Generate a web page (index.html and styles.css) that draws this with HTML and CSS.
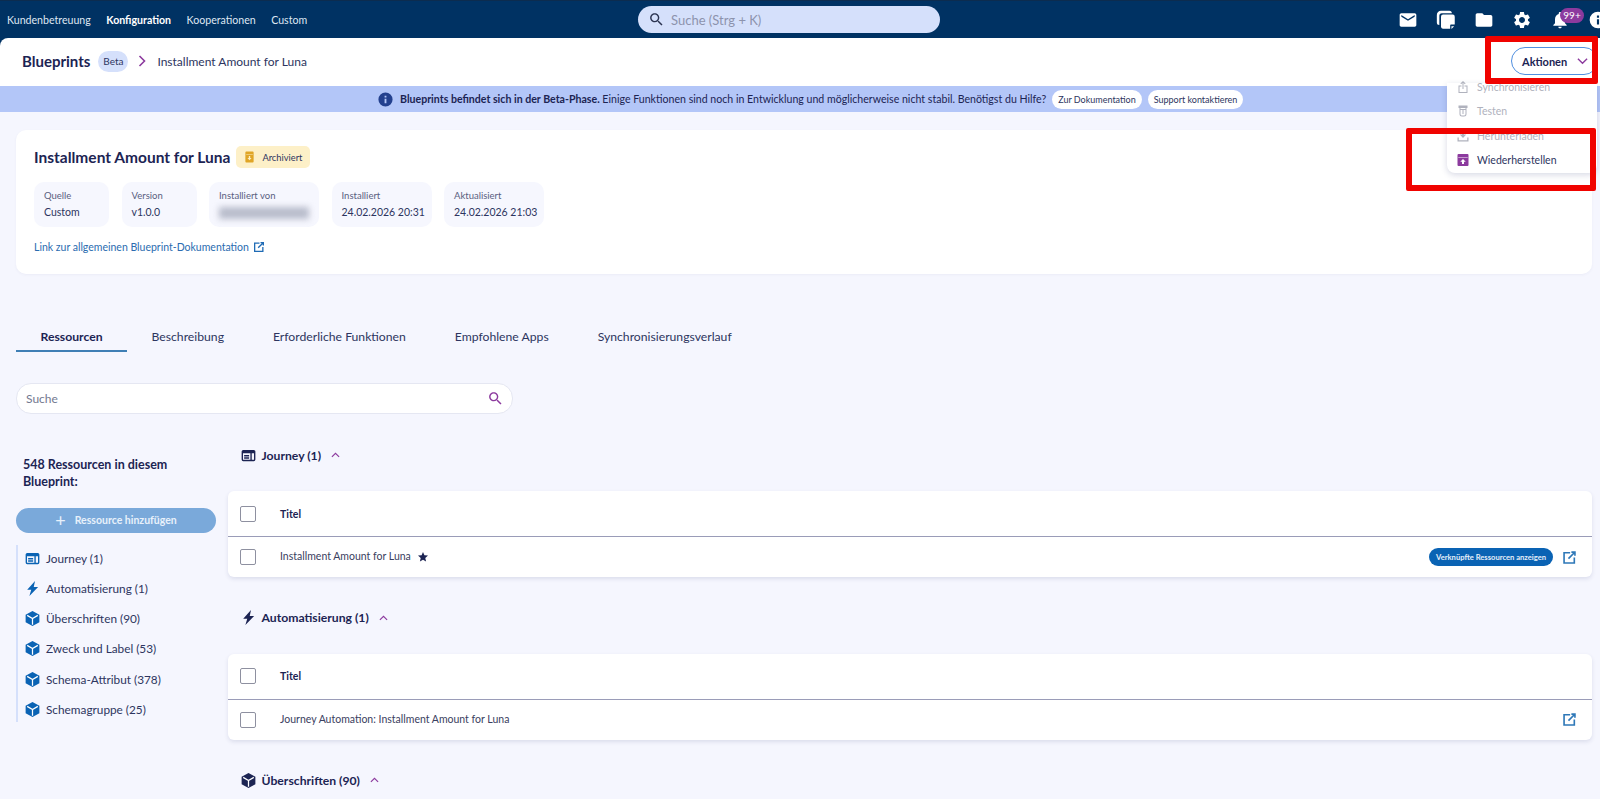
FILE: index.html
```html
<!DOCTYPE html>
<html lang="de">
<head>
<meta charset="utf-8">
<title>Blueprints</title>
<link rel="stylesheet" href="styles.css">
</head>
<body>
<svg class="defs" width="0" height="0" aria-hidden="true">
  <symbol id="i-search" viewBox="0 0 24 24"><path d="M15.5 14h-.79l-.28-.27C15.41 12.59 16 11.11 16 9.5 16 5.91 13.09 3 9.5 3S3 5.91 3 9.5 5.91 16 9.5 16c1.61 0 3.09-.59 4.23-1.57l.27.28v.79l5 4.99L20.49 19l-4.99-5zm-6 0C7.01 14 5 11.99 5 9.5S7.01 5 9.5 5 14 7.01 14 9.5 11.99 14 9.5 14z"/></symbol>
  <symbol id="i-mail" viewBox="0 0 24 24"><path d="M20 4H4c-1.1 0-2 .9-2 2v12c0 1.1.9 2 2 2h16c1.1 0 2-.9 2-2V6c0-1.1-.9-2-2-2zm0 4l-8 5-8-5V6l8 5 8-5v2z"/></symbol>
  <symbol id="i-copies" viewBox="0 0 24 24"><path d="M6 1h10a3 3 0 0 1 3 3H7a3 3 0 0 0-3 3v11a3 3 0 0 1-3-3V6a5 5 0 0 1 5-5z"/><path d="M8.500 5.500H20a2.500 2.500 0 0 1 2.500 2.500v9l-.2.5H18a1 1 0 0 0-1 1v4H8.500A2.500 2.500 0 0 1 6 20.500V8a2.500 2.500 0 0 1 2.500-2.500z"/><path d="M18.500 19.500h3.300l-3.300 3.300z"/></symbol>
  <symbol id="i-folder" viewBox="0 0 24 24"><path d="M10 4H4c-1.1 0-1.99.9-1.99 2L2 18c0 1.1.9 2 2 2h16c1.1 0 2-.9 2-2V8c0-1.1-.9-2-2-2h-8l-2-2z"/></symbol>
  <symbol id="i-gear" viewBox="0 0 24 24"><path d="M19.14 12.94c.04-.3.06-.61.06-.94 0-.32-.02-.64-.07-.94l2.03-1.58c.18-.14.23-.41.12-.61l-1.92-3.32c-.12-.22-.37-.29-.59-.22l-2.39.96c-.5-.38-1.03-.7-1.62-.94l-.36-2.54c-.04-.24-.24-.41-.48-.41h-3.84c-.24 0-.43.17-.47.41l-.36 2.54c-.59.24-1.13.57-1.62.94l-2.39-.96c-.22-.08-.47 0-.59.22L2.74 8.87c-.12.21-.08.47.12.61l2.03 1.58c-.05.3-.09.63-.09.94s.02.64.07.94l-2.03 1.58c-.18.14-.23.41-.12.61l1.92 3.32c.12.22.37.29.59.22l2.39-.96c.5.38 1.03.7 1.62.94l.36 2.54c.05.24.24.41.48.41h3.84c.24 0 .44-.17.47-.41l.36-2.54c.59-.24 1.13-.56 1.62-.94l2.39.96c.22.08.47 0 .59-.22l1.92-3.32c.12-.22.07-.47-.12-.61l-2.01-1.58zM12 15.6c-1.98 0-3.6-1.62-3.6-3.6s1.62-3.6 3.6-3.6 3.6 1.62 3.6 3.6-1.62 3.6-3.6 3.6z"/></symbol>
  <symbol id="i-bell" viewBox="0 0 24 24"><path d="M12 22c1.1 0 2-.9 2-2h-4c0 1.1.9 2 2 2zm6-6v-5c0-3.07-1.63-5.64-4.5-6.32V4c0-.83-.67-1.5-1.5-1.5s-1.5.67-1.5 1.5v.68C7.64 5.36 6 7.92 6 11v5l-2 2v1h16v-1l-2-2z"/></symbol>
  <symbol id="i-info" viewBox="0 0 24 24"><path fill-rule="evenodd" d="M12 2a10 10 0 1 0 0 20 10 10 0 0 0 0-20zm-1.3 4.6h2.6v2.6h-2.6zm0 4.4h2.6v6.4h-2.6z"/></symbol>
  <symbol id="i-journey" viewBox="0 0 24 24"><path fill-rule="evenodd" d="M3.500 3h17A2.500 2.500 0 0 1 23 5.500v13a2.500 2.500 0 0 1-2.500 2.500h-17A2.500 2.500 0 0 1 1 18.500v-13A2.500 2.500 0 0 1 3.500 3zM3.200 8.500v10.300H15V8.500zm14 0v10.300h3.600V8.500zM5 11h8v2.400H5zm0 3.800h8v2.400H5z"/></symbol>
  <symbol id="i-bolt" viewBox="0 0 24 24"><path d="M16 0 3.500 14H10L7 24 21 9.500h-7z"/></symbol>
  <symbol id="i-cube" viewBox="0 0 24 24"><path d="M12 0 23 6v12L12 24 1 18V6z"/><path d="M3.500 7 12 12l8.500-5M12 12v10" fill="none" stroke="#fff" stroke-width="2"/></symbol>
  <symbol id="i-star" viewBox="0 0 24 24"><path d="M12 17.270 18.180 21l-1.640-7.030L22 9.240l-7.190-.61L12 2 9.190 8.630 2 9.240l5.460 4.730L5.820 21z"/></symbol>
  <symbol id="i-open" viewBox="0 0 24 24"><path d="M2 3h11v2.600H4.600v13.800h13.800V12H21v10H2z"/><path d="M15 2h7v7h-2.600V6.500l-8.100 8.100-1.900-1.900 8.100-8.100H15z"/></symbol>
  <symbol id="i-share" viewBox="0 0 24 24"><path d="M12 0 6.800 5.200l1.400 1.400 2.800-2.800V16h2V3.800l2.800 2.800 1.400-1.400z"/><path d="M9 9H3v15h18V9h-6v2h4v11H5V11h4z"/></symbol>
  <symbol id="i-tube" viewBox="0 0 24 24"><path fill-rule="evenodd" d="M3 1h18v5h-2v12a5 5 0 0 1-5 5h-4a5 5 0 0 1-5-5V6H3zm4 5v2h10V6zm0 4v8a3 3 0 0 0 3 3h4a3 3 0 0 0 3-3v-8zm3 1h4v2h-4zm0 4h4v2h-4z"/></symbol>
  <symbol id="i-download" viewBox="0 0 24 24"><path d="M10 1h4v8h4.500L12 16 5.500 9H10z"/><path d="M1 15h2.500v5.500h17V15H23v8H1z"/></symbol>
  <symbol id="i-restore" viewBox="0 0 24 24"><path fill-rule="evenodd" d="M3 0h18a2 2 0 0 1 2 2v20a2 2 0 0 1-2 2H3a2 2 0 0 1-2-2V2a2 2 0 0 1 2-2zm-.5 6.500v1h19v-1zM12 10l-5.500 5.500H10V20h4v-4.500h3.500z"/></symbol>
  <symbol id="i-archive" viewBox="0 0 24 24"><path fill-rule="evenodd" d="M5 0h14a2 2 0 0 1 2 2v20a2 2 0 0 1-2 2H5a2 2 0 0 1-2-2V2a2 2 0 0 1 2-2zm-.2 6.500v1h14.400v-1zM10.500 10v4H7.500l4.500 5 4.500-5h-3v-4z"/></symbol>
</svg>

<div class="chrome">
  <header class="topbar">
    <nav class="mainnav">
      <a class="navlink">Kundenbetreuung</a>
      <a class="navlink navlink-active">Konfiguration</a>
      <a class="navlink">Kooperationen</a>
      <a class="navlink">Custom</a>
    </nav>
    <div class="globalsearch">
      <svg class="gs-icon"><use href="#i-search"/></svg>
      <span>Suche (Strg + K)</span>
    </div>
    <div class="topicons">
      <svg class="ti"><use href="#i-mail"/></svg>
      <svg class="ti"><use href="#i-copies"/></svg>
      <svg class="ti"><use href="#i-folder"/></svg>
      <svg class="ti"><use href="#i-gear"/></svg>
      <span class="bellwrap"><svg class="ti"><use href="#i-bell"/></svg><span class="badge">99+</span></span>
      <svg class="ti"><use href="#i-info"/></svg>
    </div>
  </header>
  <div class="subheader">
    <span class="crumb-root">Blueprints</span>
    <span class="beta">Beta</span>
    <svg class="crumb-sep" viewBox="0 0 10 14"><path d="M2.500 2 7.500 7l-5 5" fill="none" stroke="#8c3a9e" stroke-width="1.600"/></svg>
    <span class="crumb-leaf">Installment Amount for Luna</span>
    <button class="actions">Aktionen<svg class="actions-chev" viewBox="0 0 12 8"><path d="M1 1.500 6 6.500l5-5" fill="none" stroke="#8c3a9e" stroke-width="1.500"/></svg></button>
  </div>
</div>

<div class="banner">
  <svg class="banner-icon"><use href="#i-info"/></svg>
  <p class="banner-text"><b>Blueprints befindet sich in der Beta-Phase.</b> Einige Funktionen sind noch in Entwicklung und möglicherweise nicht stabil. Benötigst du Hilfe?</p>
  <a class="banner-btn">Zur Dokumentation</a>
  <a class="banner-btn">Support kontaktieren</a>
</div>

<main class="content">
  <section class="card">
    <div class="card-head">
      <h1 class="card-title">Installment Amount for Luna</h1>
      <span class="archived"><svg class="archived-icon"><use href="#i-archive"/></svg>Archiviert</span>
    </div>
    <div class="tiles">
      <div class="tile tile-source"><span class="tile-label">Quelle</span><span class="tile-value">Custom</span></div>
      <div class="tile tile-version"><span class="tile-label">Version</span><span class="tile-value">v1.0.0</span></div>
      <div class="tile tile-user"><span class="tile-label">Installiert von</span><span class="tile-blur"></span></div>
      <div class="tile tile-date"><span class="tile-label">Installiert</span><span class="tile-value">24.02.2026 20:31</span></div>
      <div class="tile tile-date"><span class="tile-label">Aktualisiert</span><span class="tile-value">24.02.2026 21:03</span></div>
    </div>
    <a class="doclink">Link zur allgemeinen Blueprint-Dokumentation<svg class="doclink-icon"><use href="#i-open"/></svg></a>
  </section>

  <div class="tabs">
    <a class="tab tab-active">Ressourcen</a>
    <a class="tab">Beschreibung</a>
    <a class="tab">Erforderliche Funktionen</a>
    <a class="tab">Empfohlene Apps</a>
    <a class="tab">Synchronisierungsverlauf</a>
  </div>

  <div class="searchbox">
    <span>Suche</span>
    <svg class="searchbox-icon"><use href="#i-search"/></svg>
  </div>

  <div class="columns">
    <aside class="side">
      <h2 class="side-title">548 Ressourcen in diesem Blueprint:</h2>
      <button class="addbtn"><span class="addbtn-plus">+</span>Ressource hinzufügen</button>
      <ul class="side-list">
        <li class="side-item"><svg class="side-icon"><use href="#i-journey"/></svg>Journey (1)</li>
        <li class="side-item"><svg class="side-icon"><use href="#i-bolt"/></svg>Automatisierung (1)</li>
        <li class="side-item"><svg class="side-icon"><use href="#i-cube"/></svg>Überschriften (90)</li>
        <li class="side-item"><svg class="side-icon"><use href="#i-cube"/></svg>Zweck und Label (53)</li>
        <li class="side-item"><svg class="side-icon"><use href="#i-cube"/></svg>Schema-Attribut (378)</li>
        <li class="side-item"><svg class="side-icon"><use href="#i-cube"/></svg>Schemagruppe (25)</li>
      </ul>
    </aside>

    <div class="sections">
      <section class="group">
        <h3 class="group-head"><svg class="group-icon"><use href="#i-journey"/></svg>Journey (1)<svg class="group-chev" viewBox="0 0 10 6"><path d="M1 5 5 1.200 9 5" fill="none" stroke="#8c3a9e" stroke-width="1.300"/></svg></h3>
        <div class="table">
          <div class="tr th"><span class="cb"></span><span class="th-label">Titel</span></div>
          <div class="tr">
            <span class="cb"></span><span class="td-label">Installment Amount for Luna</span>
            <svg class="star"><use href="#i-star"/></svg>
            <a class="linkpill">Verknüpfte Ressourcen anzeigen</a>
            <svg class="openicon"><use href="#i-open"/></svg>
          </div>
        </div>
      </section>
      <section class="group">
        <h3 class="group-head"><svg class="group-icon"><use href="#i-bolt"/></svg>Automatisierung (1)<svg class="group-chev" viewBox="0 0 10 6"><path d="M1 5 5 1.200 9 5" fill="none" stroke="#8c3a9e" stroke-width="1.300"/></svg></h3>
        <div class="table">
          <div class="tr th"><span class="cb"></span><span class="th-label">Titel</span></div>
          <div class="tr">
            <span class="cb"></span><span class="td-label">Journey Automation: Installment Amount for Luna</span>
            <svg class="openicon openicon-solo"><use href="#i-open"/></svg>
          </div>
        </div>
      </section>
      <section class="group">
        <h3 class="group-head"><svg class="group-icon"><use href="#i-cube"/></svg>Überschriften (90)<svg class="group-chev" viewBox="0 0 10 6"><path d="M1 5 5 1.200 9 5" fill="none" stroke="#8c3a9e" stroke-width="1.300"/></svg></h3>
      </section>
    </div>
  </div>
</main>

<div class="menu">
  <div class="menu-item menu-off"><svg class="menu-icon"><use href="#i-share"/></svg>Synchronisieren</div>
  <div class="menu-item menu-off"><svg class="menu-icon"><use href="#i-tube"/></svg>Testen</div>
  <div class="menu-item menu-off"><svg class="menu-icon"><use href="#i-download"/></svg>Herunterladen</div>
  <div class="menu-item"><svg class="menu-icon menu-icon-on"><use href="#i-restore"/></svg>Wiederherstellen</div>
</div>
<div class="mark mark-actions"></div>
<div class="mark mark-restore"></div>
</body>
</html>
```

FILE: styles.css
```css
* { box-sizing: border-box; }
html, body { margin: 0; height: 799px; overflow: hidden; }
body {
  position: relative;
  background: #f5f6fe;
  font-family: "Lato", "Liberation Sans", sans-serif;
  color: #1c2453;
  font-size: 13px;
}
.defs { position: absolute; }
svg { display: block; flex: none; fill: currentColor; }
h1, h2, h3, p, ul { margin: 0; padding: 0; }
ul { list-style: none; }
button { font: inherit; }

.chrome { background: #003263; }
.topbar { height: 38px; display: flex; align-items: center; color: #fff; border-top: 1px solid #0c2c4f; }
.mainnav { flex: 0 0 638px; display: flex; gap: 15.500px; padding-left: 7px; font-size: 10.600px; color: #dfe6f2; }
.navlink-active { font-weight: 700; color: #fff; }
.globalsearch {
  width: 302px; height: 27px; border-radius: 14px; background: #d5e0fb;
  display: flex; align-items: center; gap: 6px; padding-left: 10px;
  color: #8d93ad; font-size: 13px;
}
.gs-icon { width: 17px; height: 17px; color: #2b3350; }
.topicons { margin-left: auto; margin-right: -8px; display: flex; align-items: center; gap: 18px; color: #fff; }
.ti { width: 20px; height: 20px; }
.bellwrap { position: relative; display: block; }
.badge {
  position: absolute; left: 10px; top: -2px; width: 24px; height: 15px; border-radius: 8px;
  background: #8c3a9e; color: #fff; font-size: 10px; line-height: 15px; text-align: center;
}

.subheader {
  height: 48px; background: #fff; border-radius: 8px 0 0 0;
  display: flex; align-items: center; padding: 0 0 2px 22px;
}
.crumb-root { font-size: 15px; font-weight: 700; color: #1c2453; }
.beta {
  margin-left: 8px; width: 30px; height: 21px; border-radius: 11px; background: #d5e0fb;
  font-size: 10px; line-height: 21px; text-align: center; color: #2d3560;
}
.crumb-sep { margin-left: 9px; width: 10px; height: 14px; }
.crumb-leaf { margin-left: 10px; font-size: 12px; color: #2d3560; }
.actions {
  margin-left: auto; margin-right: 2px; width: 87px; height: 28px; padding: 0 0 0 10px;
  display: flex; align-items: center; gap: 10px;
  background: #fff; border: 1.500px solid #4f8fe0; border-radius: 14px;
  font-weight: 700; font-size: 11px; color: #1c2453;
}
.actions-chev { width: 11px; height: 8px; }

.banner {
  height: 26px; background: #b3c6f8; display: flex; align-items: center; padding-left: 377px;
  font-size: 10.600px; color: #1c2453;
}
.banner-icon { width: 17px; height: 17px; color: #23408e; margin-right: 6px; }
.banner-text { white-space: nowrap; }
.banner-btn {
  margin-left: 6px; height: 19px; padding: 0 6px; border-radius: 10px; background: #fff;
  font-size: 9px; line-height: 19px; color: #2d3560;
}

.content { padding: 18px 8px 0 16px; }
.card { height: 144px; background: #fff; border-radius: 10px; padding: 16px 18px 0; box-shadow: 0 1px 3px rgba(50,60,120,.05); }
.card-head { display: flex; align-items: center; gap: 6px; }
.card-title { font-size: 15.500px; font-weight: 700; color: #1c2453; }
.archived {
  height: 22px; padding: 0 8px; border-radius: 5px; background: #fdf0c8;
  display: flex; align-items: center; gap: 7px; font-size: 9.300px; color: #2d3560;
}
.archived-icon { width: 11px; height: 12px; color: #e0a526; }
.tiles { display: flex; gap: 12.500px; margin-top: 14px; }
.tile {
  height: 45px; border-radius: 10px; background: #f6f7fe; padding: 8px 10px 0;
  display: flex; flex-direction: column; gap: 5px; white-space: nowrap;
}
.tile-source, .tile-version { width: 75px; }
.tile-user { width: 110px; }
.tile-date { width: 100px; }
.tile-label { font-size: 9.500px; color: #5a607f; }
.tile-value { font-size: 10.500px; color: #2d3560; }
.tile-blur { width: 90px; height: 12px; margin-top: 1px; background: #b8bccb; filter: blur(3px); }
.doclink { display: flex; align-items: center; gap: 4px; margin-top: 14px; font-size: 10.500px; color: #2b6cb0; }
.doclink-icon { width: 12px; height: 12px; color: #1f6bb5; }

.tabs { display: flex; margin-top: 48px; height: 30px; font-size: 12.200px; color: #2d3560; }
.tab { padding: 0 24.500px; line-height: 29px; height: 30px; }
.tab-active { font-weight: 700; color: #1c2453; border-bottom: 2px solid #3f7fb5; }

.searchbox {
  margin-top: 31px; width: 497px; height: 31px; background: #fff;
  border: 1px solid #e5e7f2; border-radius: 15px;
  display: flex; align-items: center; justify-content: space-between; padding: 0 8px 1px 9px;
  font-size: 12px; color: #73788f;
}
.searchbox-icon { width: 17px; height: 17px; color: #8c3a9e; }

.columns { display: flex; margin-top: 29px; }
.side { flex: 0 0 200px; padding-top: 13px; }
.side-title { padding-left: 7px; font-size: 12.500px; line-height: 17px; font-weight: 700; color: #1c2453; width: 170px; }
.addbtn {
  width: 200px; height: 25px; margin-top: 18px; padding: 0 0 2px; border: 0; border-radius: 13px;
  background: #7aa9da; color: #e8f1fb; font-size: 10.500px; font-weight: 700;
  display: flex; align-items: center; justify-content: center; gap: 9px;
}
.addbtn-plus { font-size: 18px; font-weight: 400; line-height: 1; }
.side-list { margin-top: 12px; border-left: 2px solid #d5e0fb; display: flex; flex-direction: column; gap: 4.300px; }
.side-item { height: 26px; display: flex; align-items: center; gap: 6px; padding-left: 7px; font-size: 11.800px; color: #2d3560; }
.side-icon { width: 15px; height: 15px; color: #0a63b4; }

.sections { flex: 1; margin-left: 12px; margin-right: 0; }
.group { margin-bottom: 28.500px; }
.group-head {
  height: 24px; display: flex; align-items: center; padding-left: 12.500px;
  font-size: 12.200px; font-weight: 700; color: #1c2453;
}
.group-icon { width: 15px; height: 15px; margin-right: 6px; color: #1c2453; }
.group-chev { width: 9px; height: 6px; margin-left: 10px; }
.table { margin-top: 24px; background: #fff; border-radius: 6px; box-shadow: 0 2px 4px rgba(40,50,110,.12); }
.tr { height: 40px; display: flex; align-items: center; padding-left: 12px; }
.th { height: 46px; border-bottom: 1px solid #9a9cb8; }
.cb { width: 16px; height: 16px; border: 1.500px solid #8e90a0; border-radius: 2px; background: #fff; }
.th-label { margin-left: 24px; font-size: 10.500px; font-weight: 700; color: #1c2453; }
.td-label { margin: 0 0 2px 24px; font-size: 10.500px; color: #3a4060; }
.star { width: 12px; height: 12px; margin-left: 6px; color: #1c2453; }
.linkpill {
  margin-left: auto; height: 18px; padding: 0 7px; border-radius: 9px; background: #0a63b4;
  color: #e6effa; font-size: 7.600px; font-weight: 700; line-height: 18px;
}
.openicon { width: 15px; height: 15px; margin-left: 9px; margin-right: 15px; color: #2e78b8; }
.openicon-solo { margin-left: auto; }

.menu {
  position: absolute; left: 1447px; top: 83px; width: 150px; height: 90px;
  background: #fff; border-radius: 0 0 8px 8px; box-shadow: 0 2px 6px rgba(40,50,110,.18);
}
.menu-item { height: 24.300px; display: flex; align-items: center; gap: 8px; padding-left: 10px; font-size: 10.500px; color: #2d3560; }
.menu-item:first-child { margin-top: -8px; }
.menu-off { color: #b0b2bd; }
.menu-icon { width: 12px; height: 14px; }
.menu-icon-on { color: #8c3a9e; }

.mark { position: absolute; border: 6px solid #f00300; border-radius: 2px; }
.mark-actions { left: 1485px; top: 36px; width: 113px; height: 48px; }
.mark-restore { left: 1406px; top: 128px; width: 190px; height: 63px; }
```
